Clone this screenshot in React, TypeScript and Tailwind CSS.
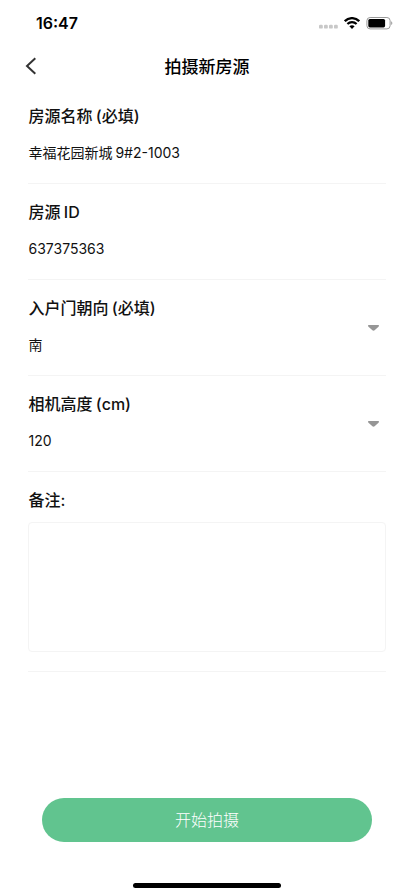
import { useState } from 'react';

type Field = {
  id: string;
  label: string;
  value: string;
  select?: boolean;
};

const fields: Field[] = [
  { id: 'name', label: '房源名称 (必填)', value: '幸福花园新城 9#2-1003' },
  { id: 'houseId', label: '房源 ID', value: '637375363' },
  { id: 'direction', label: '入户门朝向 (必填)', value: '南', select: true },
  { id: 'height', label: '相机高度 (cm)', value: '120', select: true },
];

function StatusBar() {
  return (
    <div className="flex h-11 items-center justify-between pl-[36px] pr-[21px] pt-[2px]">
      <span className="text-[16px] font-semibold leading-5 text-black">16:47</span>
      <div className="flex items-center">
        <svg width="19" height="12" viewBox="0 0 19 12" fill="#c8c8c8">
          <rect x="0" y="7.8" width="3.8" height="3.8" rx="1.2" />
          <rect x="5" y="7.8" width="3.8" height="3.8" rx="1.2" />
          <rect x="10" y="7.8" width="3.8" height="3.8" rx="1.2" />
          <rect x="15" y="7.8" width="3.8" height="3.8" rx="1.2" />
        </svg>
        <svg className="ml-[6px]" width="16" height="12" viewBox="0 0 16 12" fill="none" stroke="#000">
          <path d="M.8 4.2C4.8 .1 11.2 .1 15.2 4.2" strokeWidth="2.3" />
          <path d="M3.4 7C6 4.5 10 4.5 12.6 7" strokeWidth="2.2" />
          <path d="M5.4 9.3C6.9 8 9.1 8 10.6 9.3L8 11.9Z" fill="#000" stroke="none" />
        </svg>
        <svg className="ml-[6px]" width="27" height="13" viewBox="0 0 27 13">
          <rect x="0.9" y="0.5" width="23.2" height="11.4" rx="3.2" fill="none" stroke="#999" />
          <rect x="2.3" y="2" width="16.8" height="8.4" rx="1.6" fill="#000" />
          <path d="M25.2 4.3c1.5.6 1.5 3.2 0 3.8z" fill="#999" />
        </svg>
      </div>
    </div>
  );
}

function FieldRow({ field }: { field: Field }) {
  return (
    <div className="flex h-24 items-center justify-between border-b border-[#f4f4f4]">
      <div className="flex flex-col gap-[15px] pb-[4px] pl-[0.5px]">
        <span className="text-[16px] font-medium leading-6 text-[#111] [word-spacing:-1px]">{field.label}</span>
        <span className="text-[14px] leading-5 text-[#111] [word-spacing:-1px]">{field.value}</span>
      </div>
      {field.select && (
        <svg className="mr-[7px]" width="11" height="6" viewBox="0 0 11 6" fill="#969696">
          <path d="M.3 0H10.7Q11.3.9 10.5 1.8L6.6 5.3Q5.5 6.2 4.4 5.3L.5 1.8Q-.3.9.3 0Z" />
        </svg>
      )}
    </div>
  );
}

export default function App() {
  const [remark, setRemark] = useState('');

  return (
    <div className="flex h-[896px] w-[414px] flex-col bg-white font-['Inter','Noto_Sans_CJK_SC',sans-serif]">
      <StatusBar />

      {/* Header */}
      <header className="grid h-11 grid-cols-3 items-center px-6">
        <button aria-label="返回" className="w-6">
          <svg width="14" height="18" viewBox="0 0 14 18" fill="none" stroke="#333" strokeWidth="2">
            <path d="M11.3 1.2L3 9L11.3 16.8" />
          </svg>
        </button>
        <h1 className="whitespace-nowrap pt-[3px] text-center text-[17px] font-medium text-black">拍摄新房源</h1>
      </header>

      {/* Form */}
      <main className="flex flex-col px-[28px]">
        {fields.map((field) => (
          <FieldRow key={field.id} field={field} />
        ))}
        <div className="flex h-[200px] flex-col border-b border-[#f4f4f4] pt-4">
          <label htmlFor="remark" className="pl-[0.5px] text-[16px] font-medium leading-6 text-[#111]">
            备注:
          </label>
          <textarea
            id="remark"
            value={remark}
            onChange={(e) => setRemark(e.target.value)}
            className="mt-[10px] h-[130px] w-full resize-none rounded border border-[#f4f4f4] p-2 text-[14px] outline-none"
          />
        </div>
      </main>

      {/* Bottom action */}
      <footer className="mt-auto flex flex-col items-center pb-2">
        <button className="h-[44px] w-[330px] rounded-full bg-[#61c48f] text-[16px] font-light text-white">
          开始拍摄
        </button>
        <div className="mt-[41px] h-[5px] w-[148px] rounded-full bg-black" />
      </footer>
    </div>
  );
}
